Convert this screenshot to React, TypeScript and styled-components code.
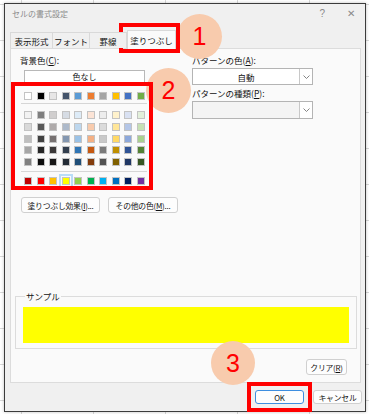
import styled, { createGlobalStyle } from 'styled-components'

const THEME = ['#FFFFFF', '#000000', '#E7E6E6', '#44546A', '#5B9BD5', '#ED7D31', '#A5A5A5', '#FFC000', '#4472C4', '#70AD47']
const TINTS = [
  ['#F2F2F2', '#7F7F7F', '#D0CECE', '#D6DCE4', '#DDEBF7', '#FCE4D6', '#EDEDED', '#FFF2CC', '#D9E1F2', '#E2EFDA'],
  ['#D9D9D9', '#595959', '#AEAAAA', '#ADB9CA', '#BDD7EE', '#F8CBAD', '#DBDBDB', '#FFE699', '#B4C6E7', '#C6E0B4'],
  ['#BFBFBF', '#404040', '#767171', '#8497B0', '#9BC2E6', '#F4B084', '#C9C9C9', '#FFD966', '#8EA9DB', '#A9D08E'],
  ['#A6A6A6', '#262626', '#3B3838', '#333F4F', '#2F75B5', '#C65911', '#7B7B7B', '#BF8F00', '#305496', '#548235'],
  ['#808080', '#0D0D0D', '#171616', '#222B35', '#1F4E78', '#833C0C', '#525252', '#806000', '#203764', '#375623'],
]
const STANDARD = ['#C00000', '#FF0000', '#FFC000', '#FFFF00', '#92D050', '#00B050', '#00B0F0', '#0070C0', '#002060', '#7030A0']

const TABS = [
  { label: '表示形式', w: 43 },
  { label: 'フォント', w: 37 },
  { label: '罫線', w: 37 },
  { label: '塗りつぶし', w: 49, active: true },
]

export default function App() {
  return (
    <>
      <GlobalStyle />
      <Page>
        <Dialog>
          <TitleBar>
            <Title>セルの書式設定</Title>
            <TitleIcons>
              <span>?</span>
              <span>✕</span>
            </TitleIcons>
          </TitleBar>

          <TabStrip>
            {TABS.map((t) => (
              <Tab key={t.label} $w={t.w} $active={!!t.active}>
                {t.label}
              </Tab>
            ))}
          </TabStrip>

          <Panel>
            <Columns>
              <LeftCol>
                <Label>
                  背景色(<u>C</u>):
                </Label>
                <NoColorButton>色なし</NoColorButton>
                <Palette>
                  <SwatchGrid>
                    {THEME.map((c) => (
                      <Swatch key={c} $c={c} />
                    ))}
                  </SwatchGrid>
                  <Separator $top={3} $bottom={7} />
                  <SwatchGrid>
                    {TINTS.flat().map((c, i) => (
                      <Swatch key={i} $c={c} />
                    ))}
                  </SwatchGrid>
                  <Separator $top={4.5} $bottom={5.5} />
                  <SwatchGrid>
                    {STANDARD.map((c) => (
                      <Swatch key={c} $c={c} $selected={c === '#FFFF00'} />
                    ))}
                  </SwatchGrid>
                </Palette>
                <ButtonRow>
                  <Button $w={79} $h={16}>
                    塗りつぶし効果(<u>I</u>)...
                  </Button>
                  <Button $w={70} $h={16}>
                    その他の色(<u>M</u>)...
                  </Button>
                </ButtonRow>
              </LeftCol>

              <RightCol>
                <Label>
                  パターンの色(<u>A</u>):
                </Label>
                <Select $h={17}>
                  <SelectValue>自動</SelectValue>
                  <SelectArrow>
                    <Chevron />
                  </SelectArrow>
                </Select>
                <Label $top={3}>
                  パターンの種類(<u>P</u>):
                </Label>
                <Select $h={18} $disabled>
                  <SelectValue />
                  <SelectArrow>
                    <Chevron />
                  </SelectArrow>
                </Select>
              </RightCol>
            </Columns>

            <SampleGroup>
              <SampleLegend>サンプル</SampleLegend>
              <SampleFill />
            </SampleGroup>

            <ClearRow>
              <Button $w={41} $h={16}>
                クリア(<u>R</u>)
              </Button>
            </ClearRow>
          </Panel>

          <Footer>
            <Button $w={49} $h={14} $default>
              OK
            </Button>
            <Button $w={49} $h={14}>
              キャンセル
            </Button>
          </Footer>
        </Dialog>

        <Marker $x={177} $y={14} $d={45}>1</Marker>
        <Marker $x={146} $y={68} $d={45}>2</Marker>
        <Marker $x={211} $y={341} $d={44}>3</Marker>
        <RedBox $x={119} $y={23} $w={61} $h={30} />
        <RedBox $x={11} $y={82} $w={142} $h={108} />
        <RedBox $x={247} $y={382} $w={65} $h={30} />
      </Page>
    </>
  )
}

function Chevron() {
  return (
    <svg width="7" height="4" viewBox="0 0 7 4">
      <path d="M0.5 0.5 L3.5 3.5 L6.5 0.5" fill="none" stroke="#777" strokeWidth="0.9" />
    </svg>
  )
}

const GlobalStyle = createGlobalStyle`
  html, body {
    margin: 0;
    padding: 0;
  }
  body {
    width: 369px;
    height: 414px;
    overflow: hidden;
    background-color: #fff;
    background-image:
      linear-gradient(to right, #d8d8d8 1px, transparent 1px),
      linear-gradient(to bottom, #d8d8d8 1px, transparent 1px);
    background-size: 72px 100%, 100% 36px;
    background-position: 21px 0, 0 4px;
    font-family: "Noto Sans CJK JP", "Liberation Sans", sans-serif;
  }
`

const Page = styled.div`
  position: relative;
  width: 369px;
  height: 414px;
  padding: 3px 0 0 4px;
  box-sizing: border-box;
`

const Dialog = styled.div`
  width: 362px;
  height: 409px;
  box-sizing: border-box;
  border: 1px solid #3c3c3c;
  background: #f0f0f0;
  display: flex;
  flex-direction: column;
  box-shadow: 0 0 3px rgba(0, 0, 0, 0.25);
`

const TitleBar = styled.div`
  height: 24px;
  flex: none;
  display: flex;
  align-items: flex-start;
  justify-content: space-between;
  padding: 5px 10px 0 7px;
  box-sizing: border-box;
`

const Title = styled.div`
  font-size: 8px;
  line-height: 10px;
  color: #8c8c8c;
`

const TitleIcons = styled.div`
  display: flex;
  gap: 22px;
  font-family: "Liberation Sans", sans-serif;
  font-size: 10px;
  line-height: 10px;
  color: #8a8a8a;
`

const TabStrip = styled.div`
  height: 20px;
  flex: none;
  display: flex;
  align-items: flex-end;
  padding-left: 5px;
`

const Tab = styled.div<{ $w: number; $active: boolean }>`
  position: relative;
  z-index: 1;
  width: ${({ $w }) => $w}px;
  height: ${({ $active }) => ($active ? 19 : 16)}px;
  margin-bottom: ${({ $active }) => ($active ? -1 : 0)}px;
  box-sizing: border-box;
  border: 1px solid #d9d9d9;
  border-bottom: none;
  border-left-width: ${({ $active }) => ($active ? 1 : 0)}px;
  background: ${({ $active }) => ($active ? '#fafafa' : '#f0f0f0')};
  display: flex;
  align-items: center;
  justify-content: center;
  font-size: 8.5px;
  color: #111;
  white-space: nowrap;
  &:first-child {
    border-left-width: 1px;
  }
`

const Panel = styled.div`
  height: 335px;
  flex: none;
  margin-left: 5px;
  width: 351px;
  box-sizing: border-box;
  border: 1px solid #dcdcdc;
  background: #fafafa;
  display: flex;
  flex-direction: column;
  padding-bottom: 7px;
`

const Columns = styled.div`
  flex: 1;
  display: flex;
  padding: 6px 0 0 9px;
`

const LeftCol = styled.div`
  width: 172px;
  display: flex;
  flex-direction: column;
  align-items: flex-start;
`

const RightCol = styled.div`
  display: flex;
  flex-direction: column;
  align-items: flex-start;
`

const Label = styled.div<{ $top?: number }>`
  margin-top: ${({ $top }) => $top ?? 0}px;
  font-size: 8.5px;
  line-height: 10px;
  color: #111;
  white-space: nowrap;
  u {
    text-underline-offset: 1px;
  }
`

const NoColorButton = styled.div`
  margin: 5px 0 0 4px;
  width: 121px;
  height: 13px;
  box-sizing: border-box;
  border: 1px solid #b8b8b8;
  background: #fff;
  display: flex;
  align-items: center;
  justify-content: center;
  font-size: 8px;
  color: #111;
`

const Palette = styled.div`
  margin: 9px 0 0 4px;
  display: flex;
  flex-direction: column;
`

const SwatchGrid = styled.div`
  display: grid;
  grid-template-columns: repeat(10, 8px);
  grid-auto-rows: 8px;
  column-gap: 4.5px;
  row-gap: 3.75px;
`

const Swatch = styled.div<{ $c: string; $selected?: boolean }>`
  box-sizing: border-box;
  border: 1px solid #c3c3c3;
  background: ${({ $c }) => $c};
  outline: ${({ $selected }) => ($selected ? '2px solid #b9dcf7' : 'none')};
  outline-offset: 1px;
`

const Separator = styled.div<{ $top: number; $bottom: number }>`
  height: 1px;
  width: 126px;
  margin: ${({ $top }) => $top}px 0 ${({ $bottom }) => $bottom}px -3px;
  background: #d6d6d6;
`

const ButtonRow = styled.div`
  margin: 12px 0 0 1px;
  display: flex;
  gap: 8px;
`

const Button = styled.div<{ $w: number; $h: number; $default?: boolean }>`
  width: ${({ $w }) => $w}px;
  height: ${({ $h }) => $h}px;
  box-sizing: border-box;
  border: 1px solid ${({ $default }) => ($default ? '#3d8ee0' : '#d0d0d0')};
  border-radius: 3px;
  background: #fdfdfd;
  display: flex;
  align-items: center;
  justify-content: center;
  font-size: 7.8px;
  color: #111;
  white-space: nowrap;
  letter-spacing: -0.2px;
`

const Select = styled.div<{ $h: number; $disabled?: boolean }>`
  margin-top: 3px;
  width: 121px;
  height: ${({ $h }) => $h}px;
  box-sizing: border-box;
  border: 1px solid #b4b4b4;
  background: ${({ $disabled }) => ($disabled ? '#f4f4f4' : '#fff')};
  display: flex;
`

const SelectValue = styled.div`
  flex: 1;
  display: flex;
  align-items: center;
  justify-content: center;
  font-size: 8.5px;
  color: #111;
`

const SelectArrow = styled.div`
  width: 12px;
  border-left: 1px solid #c8c8c8;
  background: #fff;
  display: flex;
  align-items: center;
  justify-content: center;
`

const SampleGroup = styled.fieldset`
  margin: 0 3px 10px 4px;
  padding: 6px 7px 5px 7px;
  border: 1px solid #dcdcdc;
  min-width: 0;
`

const SampleLegend = styled.legend`
  margin-left: 2px;
  padding: 0 1px;
  font-size: 8.5px;
  line-height: 10px;
  color: #111;
`

const SampleFill = styled.div`
  height: 36px;
  background: #ffff00;
`

const ClearRow = styled.div`
  display: flex;
  justify-content: flex-end;
  padding-right: 13px;
`

const Footer = styled.div`
  flex: 1;
  display: flex;
  justify-content: flex-end;
  align-items: flex-start;
  gap: 9px;
  padding: 7px 3px 0 0;
`

const Marker = styled.div<{ $x: number; $y: number; $d: number }>`
  position: absolute;
  left: ${({ $x }) => $x}px;
  top: ${({ $y }) => $y}px;
  width: ${({ $d }) => $d}px;
  height: ${({ $d }) => $d}px;
  border-radius: 50%;
  background: #f8cbad;
  display: flex;
  align-items: center;
  justify-content: center;
  font-family: "Liberation Sans", sans-serif;
  font-size: 25px;
  color: #ff0000;
`

const RedBox = styled.div<{ $x: number; $y: number; $w: number; $h: number }>`
  position: absolute;
  left: ${({ $x }) => $x}px;
  top: ${({ $y }) => $y}px;
  width: ${({ $w }) => $w}px;
  height: ${({ $h }) => $h}px;
  box-sizing: border-box;
  border: 4px solid #ff0000;
`
